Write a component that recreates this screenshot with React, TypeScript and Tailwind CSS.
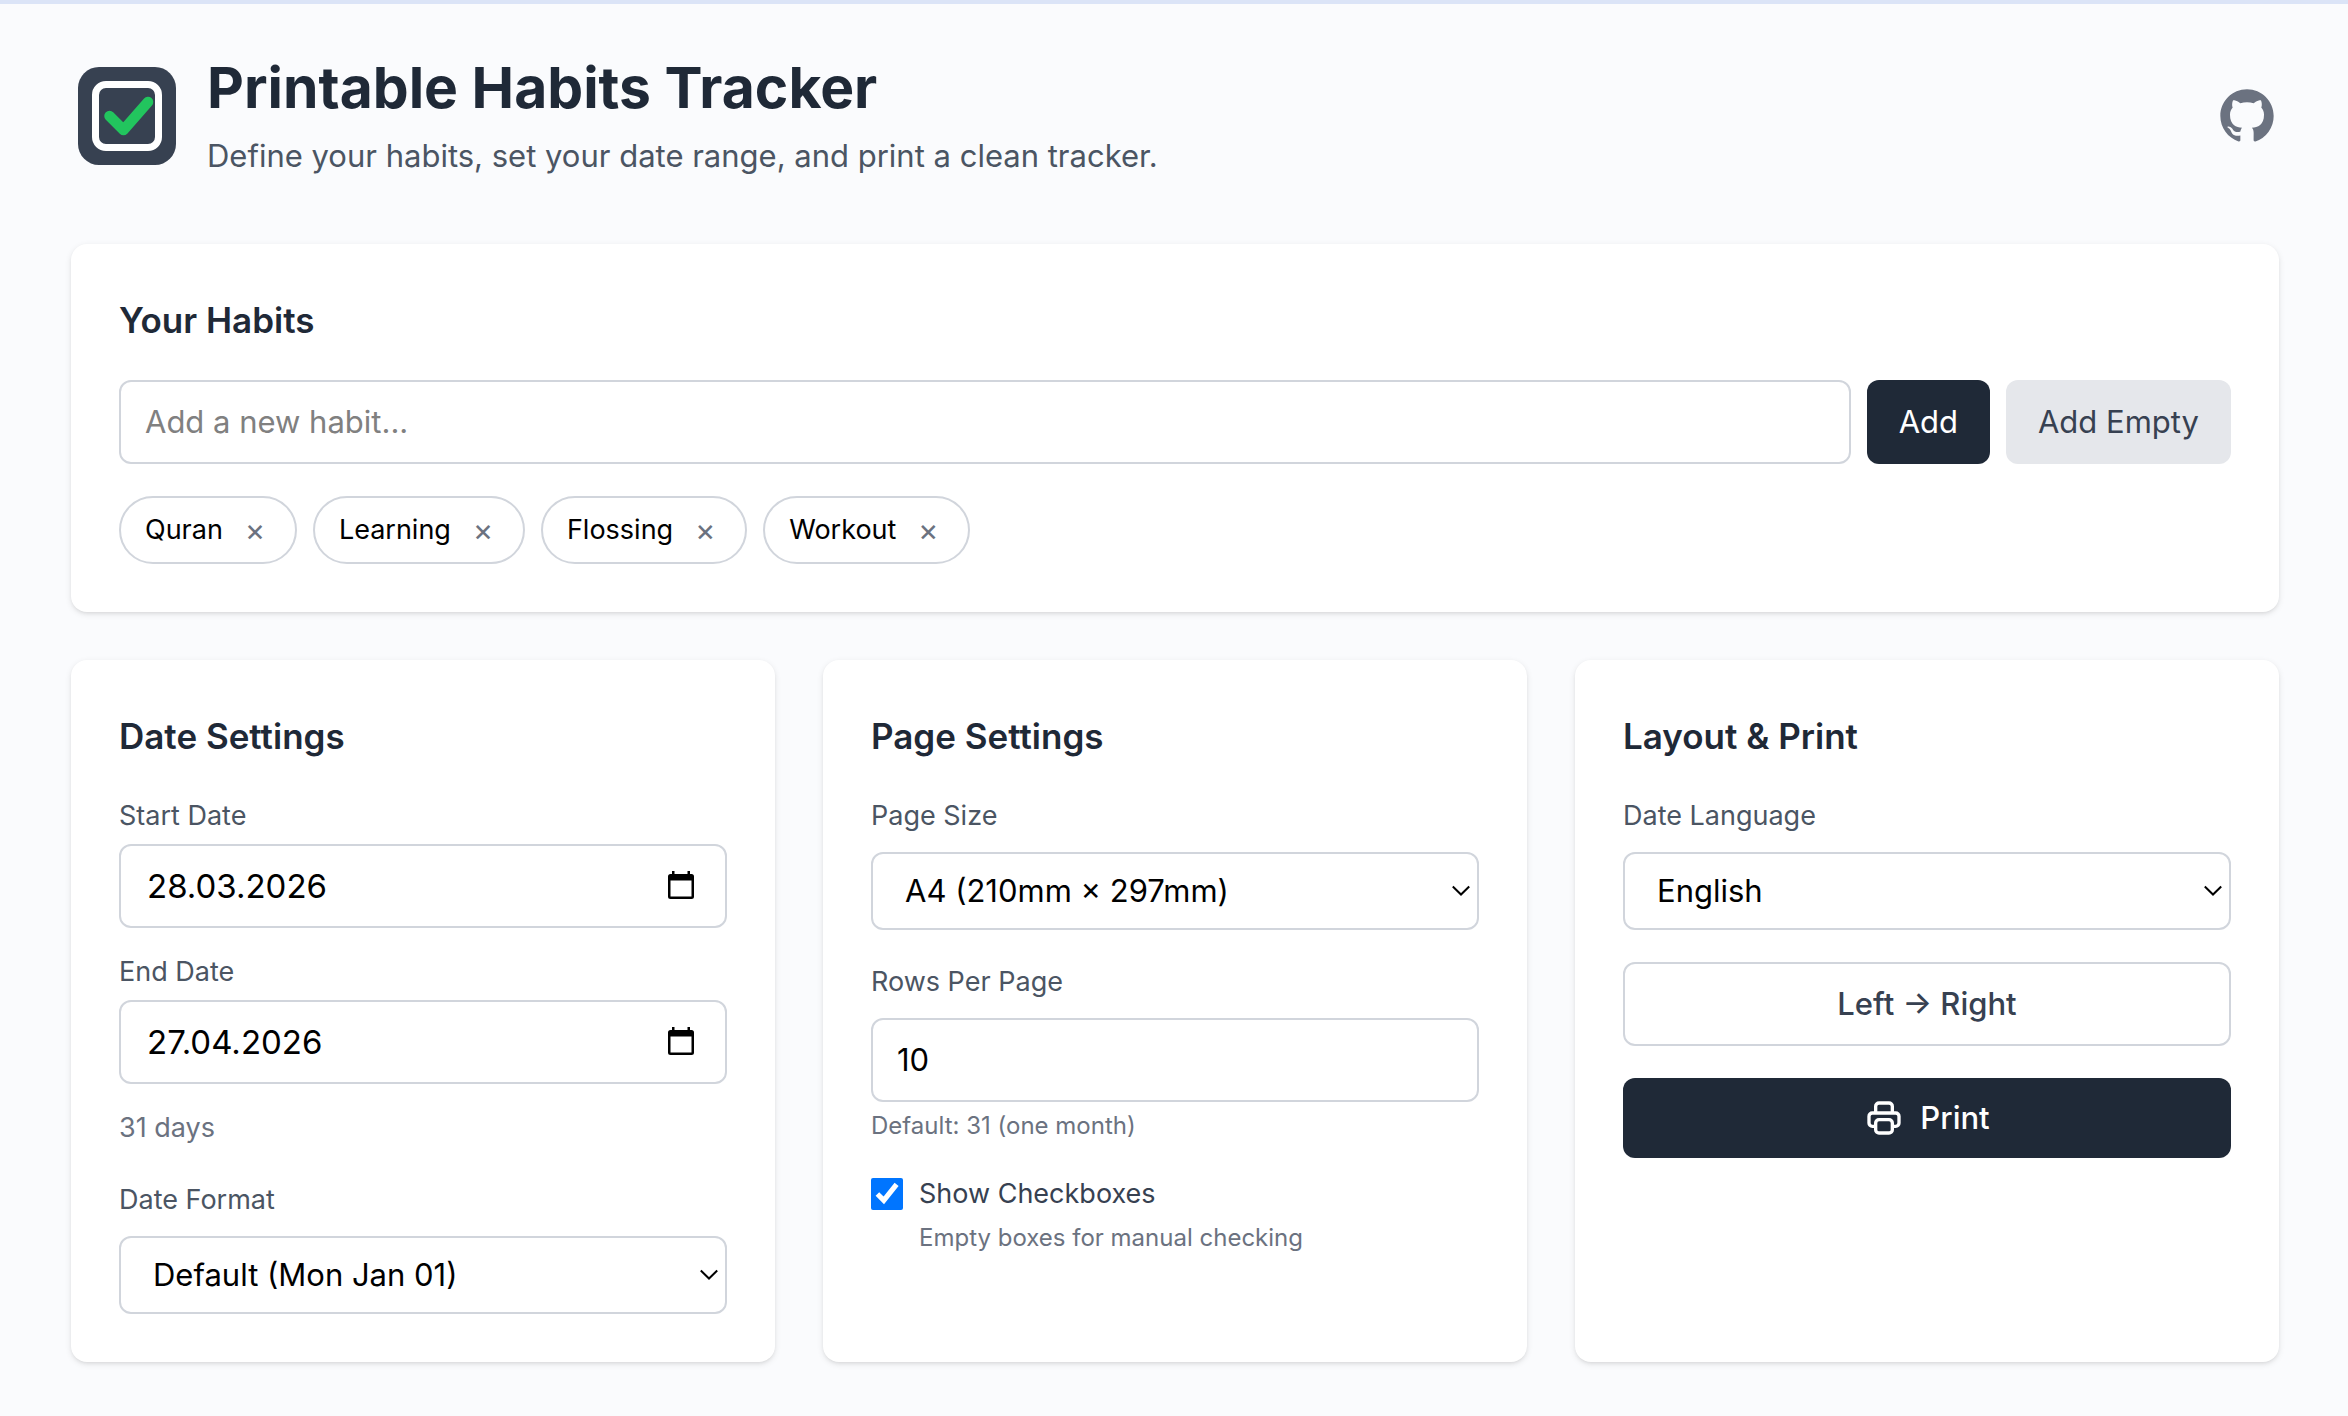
import { useId, useState } from "react";
import type { ReactNode } from "react";

const DEFAULT_HABITS = ["Quran", "Learning", "Flossing", "Workout"];

const label = "block text-[27px] leading-10 text-[#4b5563]";
const field =
  "block w-full rounded-xl border-2 border-gray-300 bg-white px-6 py-4 text-[31px] leading-12 text-black outline-none";

export default function App() {
  const [habits, setHabits] = useState(DEFAULT_HABITS);
  const [draft, setDraft] = useState("");
  const [start, setStart] = useState("28.03.2026");
  const [end, setEnd] = useState("27.04.2026");
  const [rows, setRows] = useState("10");
  const [showBoxes, setShowBoxes] = useState(true);
  const [ltr, setLtr] = useState(true);

  const addHabit = () => {
    if (!draft.trim()) return;
    setHabits([...habits, draft.trim()]);
    setDraft("");
  };

  return (
    <div className="min-h-screen border-t-4 border-[#dbe4f7] bg-[#fafbfd] font-['Inter',sans-serif] text-[#1f2937]">
      <div className="mx-auto max-w-[2304px] py-12 pr-[47px] pl-[49px]">
        <header className="mb-16 flex items-center justify-between">
          <div className="flex items-center gap-6">
            <Logo />
            <div>
              <h1 className="text-[57px] font-bold leading-18">
                Printable Habits Tracker
              </h1>
              <p className="mt-2 text-[31px] leading-12 text-[#4b5563]">
                Define your habits, set your date range, and print a clean
                tracker.
              </p>
            </div>
          </div>
          <a href="#github" aria-label="GitHub" className="text-[#6b7280]">
            <GithubMark />
          </a>
        </header>

        <Card title="Your Habits">
          <div className="flex gap-4">
            <input
              type="text"
              aria-label="New habit"
              value={draft}
              onChange={(e) => setDraft(e.target.value)}
              placeholder="Add a new habit..."
              className="min-w-0 flex-1 rounded-xl border-2 border-gray-300 bg-white px-6 py-4 text-[31px] leading-12 outline-none placeholder:text-[#808080]"
            />
            <button
              onClick={addHabit}
              className="rounded-xl bg-[#1f2937] px-8 py-4 text-[31px] leading-12 text-white"
            >
              Add
            </button>
            <button
              onClick={() => setHabits([...habits, ""])}
              className="rounded-xl bg-gray-200 px-8 py-4 text-[31px] leading-12 text-[#374151]"
            >
              Add Empty
            </button>
          </div>
          <ul className="mt-8 flex flex-wrap gap-4">
            {habits.map((habit, i) => (
              <li
                key={i}
                className="flex items-center gap-4 rounded-full border-2 border-gray-300 bg-white px-6 py-3 text-[27px] leading-10 text-black"
              >
                {habit}
                <button
                  aria-label={`Remove ${habit}`}
                  onClick={() => setHabits(habits.filter((_, n) => n !== i))}
                  className="w-8 text-center text-[31px] text-[#6b7280]"
                >
                  ×
                </button>
              </li>
            ))}
          </ul>
        </Card>

        <div className="mt-12 grid grid-cols-3 gap-12">
          <Card title="Date Settings">
            <div className="space-y-6">
              <DateField label="Start Date" value={start} onChange={setStart} />
              <DateField label="End Date" value={end} onChange={setEnd} />
              <p className="text-[27px] leading-10 text-[#6b7280]">31 days</p>
            </div>
            <div className="mt-8">
              <SelectField
                label="Date Format"
                options={["Default (Mon Jan 01)", "DD.MM.YYYY", "YYYY-MM-DD"]}
              />
            </div>
          </Card>

          <Card title="Page Settings">
            <div className="space-y-8">
              <SelectField
                label="Page Size"
                options={["A4 (210mm × 297mm)", "A5 (148mm × 210mm)"]}
              />
              <div>
                <label htmlFor="rows" className={label}>
                  Rows Per Page
                </label>
                <input
                  id="rows"
                  type="text"
                  inputMode="numeric"
                  value={rows}
                  onChange={(e) => setRows(e.target.value)}
                  className={`mt-4 ${field}`}
                />
                <p className="mt-2 text-2xl text-[#6b7280]">
                  Default: 31 (one month)
                </p>
              </div>
              <div>
                <label className="flex items-center gap-4 text-[27px] leading-10 text-[#374151]">
                  <input
                    type="checkbox"
                    checked={showBoxes}
                    onChange={(e) => setShowBoxes(e.target.checked)}
                    className="h-8 w-8"
                  />
                  Show Checkboxes
                </label>
                <p className="mt-2 ml-12 text-2xl text-[#6b7280]">
                  Empty boxes for manual checking
                </p>
              </div>
            </div>
          </Card>

          <Card title="Layout & Print">
            <div className="space-y-8">
              <SelectField
                label="Date Language"
                options={["English", "Deutsch", "Türkçe"]}
              />
              <button
                onClick={() => setLtr(!ltr)}
                className="w-full rounded-xl border-2 border-gray-300 bg-white py-4 text-[31px] font-medium leading-12 text-[#374151]"
              >
                {ltr ? "Left → Right" : "Right → Left"}
              </button>
              <button
                onClick={() => window.print()}
                className="flex w-full items-center justify-center gap-4 rounded-xl bg-[#1f2937] py-4 text-[31px] font-medium leading-12 text-white"
              >
                <PrinterIcon />
                Print
              </button>
            </div>
          </Card>
        </div>
      </div>
    </div>
  );
}

function Card({ title, children }: { title: string; children: ReactNode }) {
  return (
    <section className="rounded-2xl bg-white p-12 shadow-[0_2px_6px_rgb(0_0_0/0.1),0_2px_4px_-2px_rgb(0_0_0/0.1)]">
      <h2 className="mb-8 text-[35px] font-semibold leading-14">{title}</h2>
      {children}
    </section>
  );
}

function DateField({
  label: text,
  value,
  onChange,
}: {
  label: string;
  value: string;
  onChange: (value: string) => void;
}) {
  const id = useId();
  return (
    <div>
      <label htmlFor={id} className={label}>
        {text}
      </label>
      <div className="mt-2 flex items-center rounded-xl border-2 border-gray-300 bg-white px-6 py-4">
        <input
          id={id}
          type="text"
          value={value}
          onChange={(e) => onChange(e.target.value)}
          className="min-w-0 flex-1 pl-0.5 text-[33px] leading-12 text-black outline-none"
        />
        <button aria-label={`Pick ${text}`} className="text-black">
          <CalendarIcon />
        </button>
      </div>
    </div>
  );
}

function SelectField({
  label: text,
  options,
}: {
  label: string;
  options: string[];
}) {
  const id = useId();
  return (
    <div>
      <label htmlFor={id} className={label}>
        {text}
      </label>
      <div className="relative mt-4">
        <select
          id={id}
          className="block h-[78px] w-full appearance-none rounded-xl border-2 border-gray-300 bg-white px-8 text-[31px] text-black outline-none"
        >
          {options.map((o) => (
            <option key={o}>{o}</option>
          ))}
        </select>
        <svg
          viewBox="0 0 20 12"
          className="pointer-events-none absolute top-8 right-2 h-3 w-5 text-black"
          fill="none"
          stroke="currentColor"
          strokeWidth="2"
        >
          <path d="M1.8 2.5 10 10.5l8.2-8" />
        </svg>
      </div>
    </div>
  );
}

function Logo() {
  return (
    <svg viewBox="0 0 64 64" className="h-28 w-28" fill="none">
      <rect x="4" y="4" width="56" height="56" rx="12" fill="#374151" />
      <rect
        x="14"
        y="14"
        width="36"
        height="36"
        rx="6"
        stroke="#fff"
        strokeWidth="4"
      />
      <path
        d="M22 32l8 8 14-16"
        stroke="#22c55e"
        strokeWidth="6"
        strokeLinecap="round"
        strokeLinejoin="round"
      />
    </svg>
  );
}

function GithubMark() {
  return (
    <svg viewBox="0 0 24 24" className="h-16 w-16" fill="currentColor">
      <path
        fillRule="evenodd"
        clipRule="evenodd"
        d="M12 2C6.477 2 2 6.484 2 12.017c0 4.425 2.865 8.18 6.839 9.504.5.092.682-.217.682-.483 0-.237-.008-.868-.013-1.703-2.782.605-3.369-1.343-3.369-1.343-.454-1.158-1.11-1.466-1.11-1.466-.908-.62.069-.608.069-.608 1.003.07 1.531 1.032 1.531 1.032.892 1.53 2.341 1.088 2.91.832.092-.647.35-1.088.636-1.338-2.22-.253-4.555-1.113-4.555-4.951 0-1.093.39-1.988 1.029-2.688-.103-.253-.446-1.272.098-2.65 0 0 .84-.27 2.75 1.026A9.564 9.564 0 0112 6.844c.85.004 1.705.115 2.504.337 1.909-1.296 2.747-1.027 2.747-1.027.546 1.379.202 2.398.1 2.651.64.7 1.028 1.595 1.028 2.688 0 3.848-2.339 4.695-4.566 4.943.359.309.678.92.678 1.855 0 1.338-.012 2.419-.012 2.747 0 .268.18.58.688.482A10.019 10.019 0 0022 12.017C22 6.484 17.522 2 12 2z"
      />
    </svg>
  );
}

function CalendarIcon() {
  return (
    <svg viewBox="0 0 32 32" className="h-8 w-10" fill="currentColor">
      <path
        fillRule="evenodd"
        d="M7 1h2.500v3h13V1H25v3h1.500A2.500 2.500 0 0 1 29 6.500v20a2.500 2.500 0 0 1-2.500 2.500h-21A2.500 2.500 0 0 1 3 26.500v-20A2.500 2.500 0 0 1 5.500 4H7zM5.500 10.500v16h21v-16z"
      />
    </svg>
  );
}

function PrinterIcon() {
  return (
    <svg
      viewBox="0 0 24 24"
      className="h-10 w-10"
      fill="none"
      stroke="currentColor"
      strokeWidth="2"
      strokeLinecap="round"
      strokeLinejoin="round"
    >
      <path d="M17 17h2a2 2 0 002-2v-4a2 2 0 00-2-2H5a2 2 0 00-2 2v4a2 2 0 002 2h2m2 4h6a2 2 0 002-2v-4a2 2 0 00-2-2H9a2 2 0 00-2 2v4a2 2 0 002 2zm8-12V5a2 2 0 00-2-2H9a2 2 0 00-2 2v4h10z" />
    </svg>
  );
}
